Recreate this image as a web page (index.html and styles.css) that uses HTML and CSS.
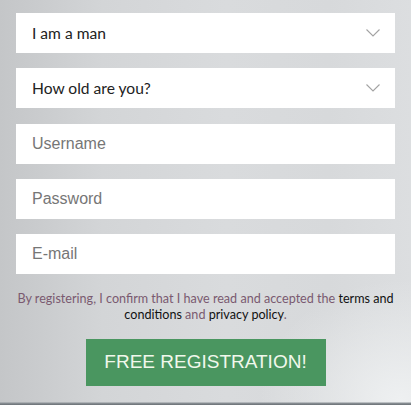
FILE: index.html
```html
<!DOCTYPE html>
<html lang="en">

<head>
    <meta charset="UTF-8">
    <meta name="viewport" content="width=device-width, initial-scale=1">
    <title>Free Registration</title>
    <link rel="stylesheet" href="styles.css">
</head>

<body>

    <!-- registration form -->
    <form class="signup">
        <div class="field select-field">
            <select name="gender">
                <option>I am a man</option>
                <option>I am a woman</option>
            </select>
            <svg class="chevron" width="14" height="8" viewBox="0 0 14 8">
                <path d="M0.5 0.5 L7 7 L13.5 0.5" fill="none" stroke="#a3a3a3" stroke-width="1.1" />
            </svg>
        </div>

        <div class="field select-field">
            <select name="age">
                <option>How old are you?</option>
            </select>
            <svg class="chevron" width="14" height="8" viewBox="0 0 14 8">
                <path d="M0.5 0.5 L7 7 L13.5 0.5" fill="none" stroke="#a3a3a3" stroke-width="1.1" />
            </svg>
        </div>

        <input class="field text-field" type="text" name="username" placeholder="Username">
        <input class="field text-field" type="password" name="password" placeholder="Password">
        <input class="field text-field" type="email" name="email" placeholder="E-mail">

        <p class="terms">
            By registering, I confirm that I have read and accepted the <a href="#">terms and conditions</a> and
            <a href="#">privacy policy</a>.
        </p>

        <button type="submit" class="submit">FREE REGISTRATION!</button>
    </form>

</body>

</html>
```

FILE: styles.css
```css
html,
body {
    height: 100%;
}

body {
    margin: 0;
    font-family: Lato, sans-serif;
    background:
        linear-gradient(to bottom, transparent 402px, #8d9398 403px, #6a7075 405px),
        radial-gradient(ellipse 140px 120px at 400px 400px, #eef0f1 0%, rgba(238, 240, 241, 0) 100%),
        linear-gradient(to right, #c4c6c8 0%, #d3d5d7 25%, #d9dbdd 55%, #d7d9db 80%, #dcdee0 100%);
}

.signup {
    display: flex;
    flex-direction: column;
    gap: 15.25px;
    padding: 13px 16px 0;
}

.field {
    box-sizing: border-box;
    height: 40px;
    width: 100%;
    background-color: #fff;
    border: none;
    margin: 0;
}

.select-field {
    display: flex;
    align-items: center;
    padding-right: 15px;
}

.select-field select {
    flex: 1;
    height: 100%;
    appearance: none;
    -webkit-appearance: none;
    border: none;
    outline: none;
    background: transparent;
    padding: 0 0 0 16px;
    font-family: Lato, sans-serif;
    font-size: 15.6px;
    color: #222;
}

.chevron {
    display: block;
    margin-top: -1px;
}

.text-field {
    padding: 0 16px;
    font-family: "Liberation Sans", Arial, sans-serif;
    font-size: 16px;
    color: #333;
    outline: none;
}

.text-field::placeholder {
    color: #767676;
}

.terms {
    margin: 0;
    padding: 2px 0 0;
    text-align: center;
    font-size: 12.6px;
    line-height: 16px;
    color: #7a5a70;
}

.terms a {
    color: #111;
    text-decoration: none;
}

.submit {
    align-self: center;
    width: 240px;
    height: 47px;
    border: none;
    background-color: #4a9660;
    color: #f1f8ec;
    font-family: "Liberation Sans", Arial, sans-serif;
    font-size: 19px;
    cursor: pointer;
}
```
